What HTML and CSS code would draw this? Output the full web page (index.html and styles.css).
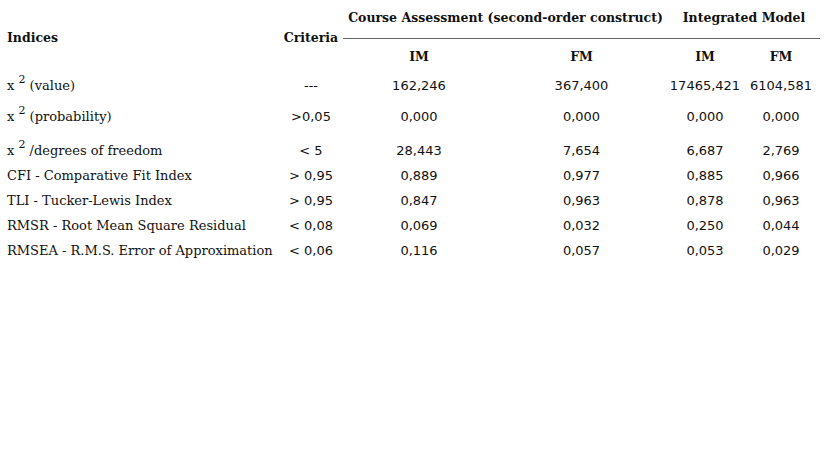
FILE: index.html
```html
<!DOCTYPE html>
<html>
<head>
<meta charset="utf-8">
<link rel="stylesheet" href="styles.css">
</head>
<body>
<table class="fit">
  <colgroup>
    <col class="c-ind"><col class="c-crit"><col class="c-im1"><col class="c-fm1"><col class="c-im2"><col class="c-fm2">
  </colgroup>
  <thead>
    <tr class="h1">
      <th rowspan="2" class="left hmid">Indices</th>
      <th rowspan="2" class="hmid">Criteria</th>
      <th colspan="2" class="group">Course Assessment (second-order construct)</th>
      <th colspan="2" class="group">Integrated Model</th>
    </tr>
    <tr class="h2">
      <th>IM</th><th>FM</th><th>IM</th><th>FM</th>
    </tr>
  </thead>
  <tbody>
    <tr class="r-val"><td class="left">x <sup>2</sup> (value)</td><td>---</td><td>162,246</td><td>367,400</td><td>17465,421</td><td>6104,581</td></tr>
    <tr class="r-prob"><td class="left">x <sup>2</sup> (probability)</td><td>&gt;0,05</td><td>0,000</td><td>0,000</td><td>0,000</td><td>0,000</td></tr>
    <tr class="r-df"><td class="left">x <sup>2</sup> /degrees of freedom</td><td>&lt; 5</td><td>28,443</td><td>7,654</td><td>6,687</td><td>2,769</td></tr>
    <tr><td class="left">CFI - Comparative Fit Index</td><td>&gt; 0,95</td><td>0,889</td><td>0,977</td><td>0,885</td><td>0,966</td></tr>
    <tr><td class="left">TLI - Tucker-Lewis Index</td><td>&gt; 0,95</td><td>0,847</td><td>0,963</td><td>0,878</td><td>0,963</td></tr>
    <tr><td class="left">RMSR - Root Mean Square Residual</td><td>&lt; 0,08</td><td>0,069</td><td>0,032</td><td>0,250</td><td>0,044</td></tr>
    <tr><td class="left">RMSEA - R.M.S. Error of Approximation</td><td>&lt; 0,06</td><td>0,116</td><td>0,057</td><td>0,053</td><td>0,029</td></tr>
  </tbody>
</table>
</body>
</html>
```
FILE: styles.css
```css
html, body {
  margin: 0;
  padding: 0;
  background: #ffffff;
}
body {
  padding-left: 7px;
  color: #111;
}
.fit {
  border-collapse: collapse;
  table-layout: fixed;
  width: 813px;
}
.c-ind { width: 272px; }
.c-crit { width: 64px; }
.c-im1 { width: 152px; }
.c-fm1 { width: 173px; }
.c-im2 { width: 74px; }
.c-fm2 { width: 78px; }

th {
  font-family: "DejaVu Serif", "Liberation Serif", serif;
  font-weight: bold;
  font-size: 12.5px;
  text-align: center;
  padding: 0;
  white-space: nowrap;
}
td {
  font-family: "DejaVu Sans", Verdana, sans-serif;
  font-size: 13px;
  text-align: center;
  padding: 0;
  white-space: nowrap;
  vertical-align: bottom;
  line-height: 25px;
}
td.left {
  font-family: "DejaVu Serif", "Liberation Serif", serif;
  font-size: 13px;
  text-align: left;
}
th.left { text-align: left; }
th.hmid {
  vertical-align: middle;
  padding-top: 4px;
}
tr.h1 { height: 38px; }
th.group {
  vertical-align: top;
  padding-top: 10px;
  border-bottom: 1px solid #666;
  box-shadow: 0 1px 0 #bbb;
}
tr.h2 { height: 32px; }
tr.h2 th {
  vertical-align: bottom;
  padding-bottom: 6px;
}
tr { height: 25px; }
tr.r-val { height: 28px; }
tr.r-prob { height: 31px; }
tr.r-df { height: 34px; }
sup {
  font-size: 11px;
  line-height: 0;
  vertical-align: 7px;
}
```
